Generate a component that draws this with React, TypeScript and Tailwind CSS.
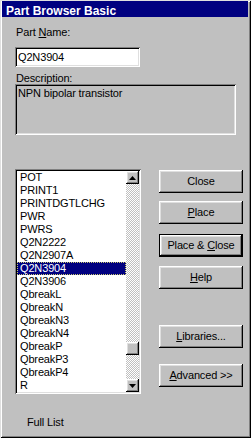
import React from 'react';

const raised =
    'bg-[#c0c0c0] shadow-[inset_-1px_-1px_#000,inset_1px_1px_#fff,inset_-2px_-2px_#808080,inset_2px_2px_#dfdfdf]';
const sunken =
    'shadow-[inset_1px_1px_#808080,inset_-1px_-1px_#fff,inset_2px_2px_#000,inset_-2px_-2px_#dfdfdf]';

const parts = [
    'POT',
    'PRINT1',
    'PRINTDGTLCHG',
    'PWR',
    'PWRS',
    'Q2N2222',
    'Q2N2907A',
    'Q2N3904',
    'Q2N3906',
    'QbreakL',
    'QbreakN',
    'QbreakN3',
    'QbreakN4',
    'QbreakP',
    'QbreakP3',
    'QbreakP4',
    'R',
];

const Arrow = ({ down }: { down?: boolean }) => (
    <svg width="7" height="4" viewBox="0 0 7 4">
        <polygon
            points={down ? '0,0 7,0 3.5,4' : '3.5,0 7,4 0,4'}
            fill="#000"
        />
    </svg>
);

const Button: React.FC<{
    className?: string;
    isDefault?: boolean;
    children: React.ReactNode;
}> = ({ className = '', isDefault, children }) => (
    <div
        className={`h-[23px] w-[84px] ${className} ${
            isDefault ? 'border border-black' : ''
        }`}
    >
        <div
            className={`flex h-full w-full items-center justify-center leading-[13px] ${raised}`}
        >
            {children}
        </div>
    </div>
);

const App: React.FC = () => {
    return (
        <div className="font-['Liberation_Sans',Arial,sans-serif] text-[11px] tracking-[-0.15px] text-black">
            <div className="flex h-[438px] w-[251px] flex-col bg-[#c0c0c0] pt-[1px] pr-[3px] pl-[2px] shadow-[inset_1px_1px_#dfdfdf,inset_-1px_-1px_#000,inset_2px_2px_#fff,inset_-2px_-2px_#808080]">
                {/* title bar */}
                <div className="h-[16px] bg-[#000080] pt-[4px] pl-[4px] text-[12px] leading-[12px] font-bold tracking-normal text-white">
                    Part Browser Basic
                </div>

                <div className="flex flex-col pl-[13px]">
                    <div className="mt-[9px] ml-[1px] leading-[13px]">
                        Part <u>N</u>ame:
                    </div>
                    <div
                        className={`mt-[8px] flex h-[20px] w-[125px] items-center bg-white pl-[3px] leading-[16px] ${sunken}`}
                    >
                        Q2N3904
                    </div>

                    <div className="mt-[5px] ml-[1px] leading-[12px]">
                        Description:
                    </div>
                    <div
                        className={`h-[51px] w-[221px] pt-[3px] pl-[3px] leading-[13px] ${sunken}`}
                    >
                        NPN bipolar transistor
                    </div>

                    <div className="mt-[34px] flex">
                        {/* list box */}
                        <div
                            className={`flex h-[225px] w-[126px] bg-white p-[2px] ${sunken}`}
                        >
                            <div className="flex w-[109px] flex-col">
                                {parts.map((p) =>
                                    p === 'Q2N3904' ? (
                                        <div
                                            key={p}
                                            className="h-[13px] border border-dotted border-[#c8c870] bg-[#000080] pl-[2px] leading-[11px] text-white"
                                        >
                                            {p}
                                        </div>
                                    ) : (
                                        <div
                                            key={p}
                                            className="h-[13px] pl-[3px] leading-[13px]"
                                        >
                                            {p}
                                        </div>
                                    ),
                                )}
                            </div>
                            {/* scrollbar */}
                            <div className="flex w-[13px] flex-col">
                                <div
                                    className={`flex h-[13px] items-center justify-center ${raised}`}
                                >
                                    <Arrow />
                                </div>
                                <div className="flex flex-1 flex-col bg-[repeating-conic-gradient(#c0c0c0_0_25%,#fff_0_50%)] bg-size-[2px_2px]">
                                    <div className="h-[158px]" />
                                    <div className={`h-[13px] ${raised}`} />
                                </div>
                                <div
                                    className={`flex h-[13px] items-center justify-center ${raised}`}
                                >
                                    <Arrow down />
                                </div>
                            </div>
                        </div>

                        {/* buttons */}
                        <div className="ml-[18px] flex flex-col">
                            <Button className="mt-[1px]">Close</Button>
                            <Button className="mt-[8px]">
                                <span>
                                    <u>P</u>lace
                                </span>
                            </Button>
                            <Button className="mt-[10px]" isDefault>
                                <span>
                                    Place &amp; <u>C</u>lose
                                </span>
                            </Button>
                            <Button className="mt-[9px]">
                                <span>
                                    <u>H</u>elp
                                </span>
                            </Button>
                            <Button className="mt-[36px]">
                                <span>
                                    <u>L</u>ibraries...
                                </span>
                            </Button>
                            <Button className="mt-[16px]">
                                <span>
                                    <u>A</u>dvanced &gt;&gt;
                                </span>
                            </Button>
                        </div>
                    </div>

                    <div className="mt-[22px] ml-[12px] leading-[13px]">
                        Full List
                    </div>
                </div>
            </div>
        </div>
    );
};

export default App;
